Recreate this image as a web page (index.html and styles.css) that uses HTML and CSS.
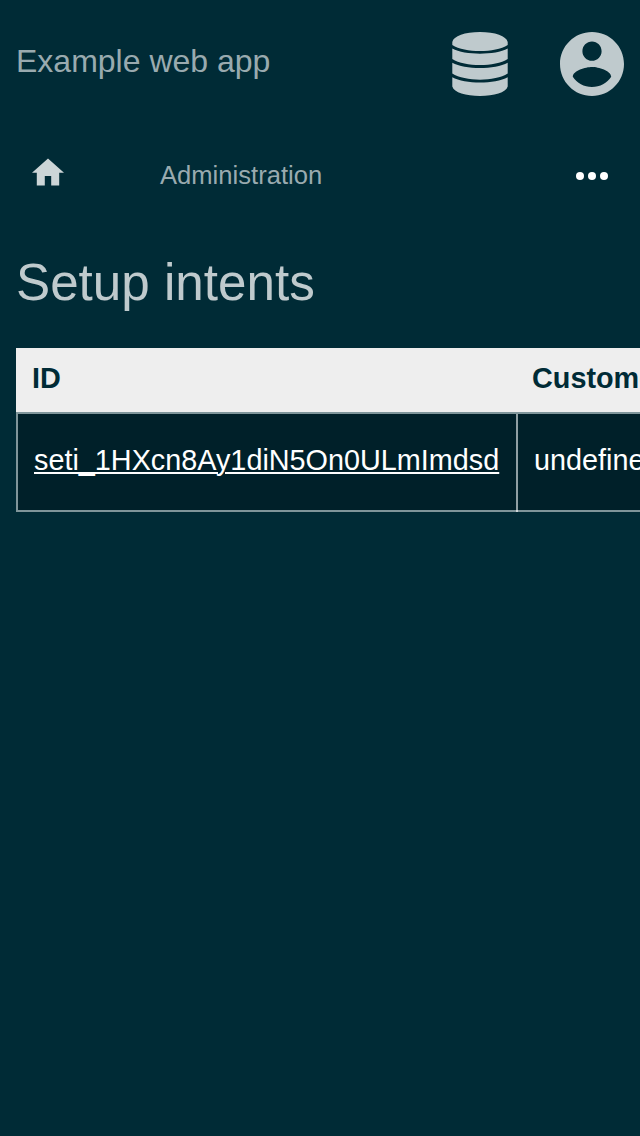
FILE: index.html
```html
<!DOCTYPE html>
<html lang="en">
<head>
<meta charset="utf-8">
<title>Setup intents</title>
<link rel="stylesheet" href="styles.css">
</head>
<body>
<header class="header">
  <span class="brand">Example web app</span>
  <svg class="database" viewBox="0 0 56 64"><path d="M0.3 10C1.500 4 13 0 28 0S54.500 4 55.700 10V13C43 21 13 21 0.3 13ZM0.3 16.500C13 23.400 43 23.400 55.700 16.500V27.100C43 35.100 13 35.100 0.3 27.100ZM0.3 30.700C13 37.700 43 37.700 55.700 30.700V41.500C43 49.700 13 49.700 0.3 41.500ZM0.3 45.200C13 52.300 43 52.300 55.700 45.200V54.500C54 60.500 42 64 28 64S2 60.500 0.3 54.500Z"/></svg>
  <svg class="account" viewBox="2 2 20 20"><path d="M12 2C6.480 2 2 6.480 2 12s4.480 10 10 10 10-4.480 10-10S17.520 2 12 2zm0 3c1.660 0 3 1.340 3 3s-1.340 3-3 3-3-1.340-3-3 1.340-3 3-3zm0 14.200c-2.500 0-4.710-1.280-6-3.220.03-1.990 4-3.080 6-3.080 1.990 0 5.970 1.090 6 3.080-1.290 1.940-3.500 3.220-6 3.220z"/></svg>
</header>
<nav class="nav">
  <svg class="home" viewBox="-0.5 -0.375 25 25"><path d="M10 20v-6h4v6h5v-8h3L12 3 2 12h3v8z"/></svg>
  <span class="crumb">Administration</span>
  <svg class="more" viewBox="0 0 32 8"><circle cx="4" cy="4" r="4"/><circle cx="16" cy="4" r="4"/><circle cx="28" cy="4" r="4"/></svg>
</nav>
<main class="main">
  <h1 class="title">Setup intents</h1>
  <div class="table">
    <div class="row head"><div class="cell">ID</div><div class="cell">Customer</div></div>
    <div class="row body"><div class="cell"><a class="link" href="#">seti_1HXcn8Ay1diN5On0ULmImdsd</a></div><div class="cell">undefined</div></div>
  </div>
</main>
</body>
</html>
```

FILE: styles.css
```css
* { box-sizing: border-box; }
body {
  margin: 0;
  height: 1136px;
  overflow: hidden;
  background: #002b36;
  color: #fff;
  font-family: "Liberation Sans", Arial, sans-serif;
}
.header {
  display: flex;
  align-items: center;
  height: 128px;
  padding: 0 16px;
}
.brand {
  flex: 1;
  padding-bottom: 6px;
  font-size: 32px;
  color: #99aaaf;
}
.database { width: 56px; height: 64px; margin-right: 52px; fill: #bfcacd; }
.account { width: 64px; height: 64px; fill: #bfcacd; }
.nav {
  display: flex;
  align-items: center;
  height: 96px;
  padding: 0 32px 0 28px;
}
.home { width: 40px; height: 40px; margin-bottom: 6px; fill: #ccd5d7; }
.crumb {
  flex: 1;
  margin-left: 92px;
  padding-bottom: 2px;
  font-size: 25.6px;
  color: #99aaaf;
}
.more { width: 32px; height: 8px; fill: #fff; }
.main { padding-left: 16px; }
.title {
  margin: 0;
  height: 124px;
  font-size: 51.2px;
  font-weight: 400;
  line-height: 117px;
  color: #bfcacd;
}
.table { width: 624px; overflow: hidden; font-size: 28.8px; }
.row { display: grid; grid-template-columns: 500px 300px; }
.head {
  height: 64px;
  background: #eee;
  color: #002b36;
  font-weight: 700;
  line-height: 60px;
}
.head .cell { padding-left: 16px; }
.body {
  height: 100px;
  border: solid #7f959a;
  border-width: 2px 0;
  background: #002029;
  line-height: 92px;
}
.body .cell { position: relative; height: 96px; padding-left: 16px; border-left: 2px solid #7f959a; }
.body .cell + .cell { border-left-color: #8f9fa3; }
/* Brighter joint where the column divider meets the bottom border */
.body .cell + .cell::after {
  content: "";
  position: absolute;
  left: -2px;
  bottom: -2px;
  width: 2px;
  height: 2px;
  background: #d0d8da;
}
.link {
  color: #fff;
  text-decoration: underline;
  text-decoration-thickness: 2px;
  text-underline-offset: 2px;
}
```
